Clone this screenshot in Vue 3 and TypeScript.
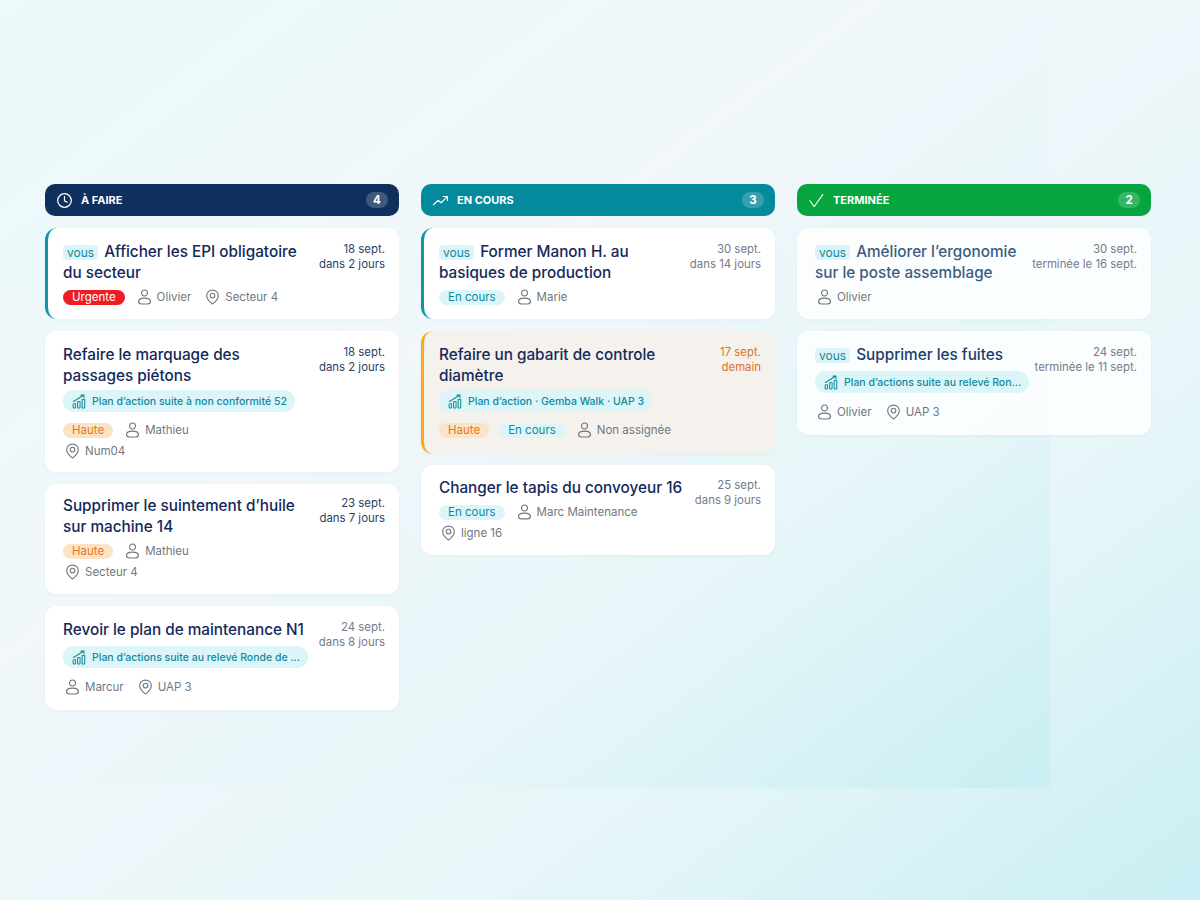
<script setup lang="ts">
type Item = { kind: 'urgent' | 'high' | 'status' | 'user' | 'place'; text: string }
type Task = {
  title: string
  vous?: boolean
  date: string
  due: string
  plan?: string
  rows: Item[][]
  tone?: string
  cls?: string
}
type Column = { name: string; count: number; icon: string; cls: string; tasks: Task[] }

const columns: Column[] = [
  {
    name: 'À FAIRE', count: 4, icon: 'clock', cls: 'navy',
    tasks: [
      {
        title: 'Afficher les EPI obligatoire du secteur', vous: true, date: '18 sept.', due: 'dans 2 jours', tone: 'soon', cls: 'accent',
        rows: [[{ kind: 'urgent', text: 'Urgente' }, { kind: 'user', text: 'Olivier' }, { kind: 'place', text: 'Secteur 4' }]],
      },
      {
        title: 'Refaire le marquage des passages piétons', date: '18 sept.', due: 'dans 2 jours', tone: 'soon', cls: 'has-plan',
        plan: 'Plan d’action suite à non conformité 52',
        rows: [[{ kind: 'high', text: 'Haute' }, { kind: 'user', text: 'Mathieu' }], [{ kind: 'place', text: 'Num04' }]],
      },
      {
        title: 'Supprimer le suintement d’huile sur machine 14', date: '23 sept.', due: 'dans 7 jours', tone: 'soon', cls: 'top12',
        rows: [[{ kind: 'high', text: 'Haute' }, { kind: 'user', text: 'Mathieu' }], [{ kind: 'place', text: 'Secteur 4' }]],
      },
      {
        title: 'Revoir le plan de maintenance N1', date: '24 sept.', due: 'dans 8 jours', cls: 'one-line',
        plan: 'Plan d’actions suite au relevé Ronde de ...',
        rows: [[{ kind: 'user', text: 'Marcur' }, { kind: 'place', text: 'UAP 3' }]],
      },
    ],
  },
  {
    name: 'EN COURS', count: 3, icon: 'trend', cls: 'teal',
    tasks: [
      {
        title: 'Former Manon H. au basiques de production', vous: true, date: '30 sept.', due: 'dans 14 jours', cls: 'accent',
        rows: [[{ kind: 'status', text: 'En cours' }, { kind: 'user', text: 'Marie' }]],
      },
      {
        title: 'Refaire un gabarit de controle diamètre', date: '17 sept.', due: 'demain', tone: 'late', cls: 'has-plan warn',
        plan: 'Plan d’action · Gemba Walk · UAP 3',
        rows: [[{ kind: 'high', text: 'Haute' }, { kind: 'status', text: 'En cours' }, { kind: 'user', text: 'Non assignée' }]],
      },
      {
        title: 'Changer le tapis du convoyeur 16', date: '25 sept.', due: 'dans 9 jours', cls: 'top13 pulled',
        rows: [[{ kind: 'status', text: 'En cours' }, { kind: 'user', text: 'Marc Maintenance' }], [{ kind: 'place', text: 'ligne 16' }]],
      },
    ],
  },
  {
    name: 'TERMINÉE', count: 2, icon: 'check', cls: 'green',
    tasks: [
      {
        title: 'Améliorer l’ergonomie sur le poste assemblage', vous: true, date: '30 sept.', due: 'terminée le 16 sept.', cls: 'done faded',
        rows: [[{ kind: 'user', text: 'Olivier' }]],
      },
      {
        title: 'Supprimer les fuites', vous: true, date: '24 sept.', due: 'terminée le 11 sept.', cls: 'done one-line',
        plan: 'Plan d’actions suite au relevé Ron...',
        rows: [[{ kind: 'user', text: 'Olivier' }, { kind: 'place', text: 'UAP 3' }]],
      },
    ],
  },
]

const chipKinds = ['urgent', 'high', 'status']
</script>

<template>
  <svg class="sprite" aria-hidden="true">
    <symbol id="i-clock" viewBox="0 0 18 18">
      <circle cx="9" cy="9" r="7.2" fill="none" stroke="currentColor" stroke-width="1.3" />
      <path d="M9 4.8V9.4L11.8 10.9" fill="none" stroke="currentColor" stroke-width="1.3" stroke-linecap="round" />
    </symbol>
    <symbol id="i-trend" viewBox="0 0 18 18">
      <path d="M1.5 13.5 6.4 8.8 9.6 11.4 16 5.2M11.8 4.8H16.3V9" fill="none" stroke="currentColor" stroke-width="1.2" stroke-linecap="round" stroke-linejoin="round" />
    </symbol>
    <symbol id="i-check" viewBox="0 0 18 18">
      <path d="M2 9.3 6.6 15.4 15.6 2.8" fill="none" stroke="currentColor" stroke-width="1.2" stroke-linecap="round" stroke-linejoin="round" />
    </symbol>
    <symbol id="i-user" viewBox="0 0 16 17">
      <circle cx="8" cy="4.2" r="3.2" fill="none" stroke="currentColor" stroke-width="1.2" />
      <path d="M1.600 13.400C1.600 11 4.400 9.700 8 9.700S14.400 11 14.400 13.400C14.400 15.100 13 15.900 11.200 15.900H4.800C3 15.900 1.600 15.100 1.600 13.400Z" fill="none" stroke="currentColor" stroke-width="1.2" />
    </symbol>
    <symbol id="i-pin" viewBox="0 0 16 17">
      <path d="M8 1.100C4.400 1.100 1.800 3.800 1.800 7.100 1.800 10.700 5.300 13.900 8 16 10.700 13.900 14.200 10.700 14.200 7.100 14.200 3.800 11.600 1.100 8 1.100Z" fill="none" stroke="currentColor" stroke-width="1.2" stroke-linejoin="round" />
      <circle cx="8" cy="7" r="2.500" fill="none" stroke="currentColor" stroke-width="1.2" />
    </symbol>
    <symbol id="i-chart" viewBox="0 0 16 16">
      <g fill="none" stroke="currentColor" stroke-width="1.1" stroke-linejoin="round">
        <rect x="1.200" y="10.500" width="2.600" height="4.500" rx=".8" />
        <rect x="6" y="8" width="2.600" height="7" rx=".8" />
        <rect x="10.800" y="5.500" width="2.800" height="9.500" rx=".8" />
        <path d="M1.500 8 8 4 12 1.600M9.600 1.200H12.800V4" stroke-linecap="round" />
      </g>
    </symbol>
  </svg>

  <main class="board">
    <section v-for="col in columns" :key="col.name" class="column">
      <header class="head" :class="col.cls">
        <svg class="head-icon"><use :href="`#i-${col.icon}`" /></svg>
        <span class="head-name">{{ col.name }}</span>
        <span class="count">{{ col.count }}</span>
      </header>

      <article v-for="task in col.tasks" :key="task.title" class="card" :class="task.cls">
        <div class="card-top">
          <h3 class="title"><span v-if="task.vous" class="vous">vous</span>{{ task.title }}</h3>
          <div class="dates" :class="task.tone">
            <div>{{ task.date }}</div>
            <div>{{ task.due }}</div>
          </div>
        </div>

        <div v-if="task.plan" class="plan">
          <svg class="plan-icon"><use href="#i-chart" /></svg>
          <span>{{ task.plan }}</span>
        </div>

        <div class="rows">
          <div v-for="(row, i) in task.rows" :key="i" class="row">
            <template v-for="item in row" :key="item.text">
              <span v-if="chipKinds.includes(item.kind)" class="chip" :class="item.kind">{{ item.text }}</span>
              <span v-else class="info" :class="item.kind">
                <svg class="info-icon"><use :href="item.kind === 'user' ? '#i-user' : '#i-pin'" /></svg>
                {{ item.text }}
              </span>
            </template>
          </div>
        </div>
      </article>
    </section>
  </main>
</template>

<style>
html,
body {
  margin: 0;
  background: #e6f6f9;
}
</style>

<style scoped>
.sprite {
  display: none;
}

.board {
  box-sizing: border-box;
  width: 1200px;
  height: 900px;
  padding: 184px 49px 0 45px;
  display: grid;
  grid-template-columns: repeat(3, 354px);
  column-gap: 22px;
  align-items: start;
  font-family: Inter, "Open Sans", sans-serif;
  background:
    linear-gradient(143deg, #ebfafa 0%, #f1f7fb 42%, #e6f6f8 72%, #c9eef3 100%) 0 0 / 1050px 788px no-repeat,
    linear-gradient(143deg, #ebfafa 0%, #f1f7fb 42%, #e6f6f8 72%, #c9eef3 100%);
}

.column {
  display: flex;
  flex-direction: column;
  gap: 12px;
}

.head {
  height: 32px;
  border-radius: 10px;
  display: flex;
  align-items: center;
  padding: 0 11px 0 11px;
  color: #fff;
  box-sizing: border-box;
}

.navy { background: #0f2f5c; }
.teal { background: #05899c; }
.green { background: #06a53f; }

.head-icon {
  width: 17px;
  height: 17px;
  margin-right: 8px;
}

.head-name {
  font-size: 11px;
  font-weight: 700;
}

.count {
  margin-left: auto;
  width: 22px;
  height: 16px;
  border-radius: 8px;
  background: rgba(255, 255, 255, 0.2);
  font-size: 11.5px;
  font-weight: 700;
  line-height: 16px;
  text-align: center;
}

.card {
  box-sizing: border-box;
  background: #fff;
  border-radius: 12px;
  padding: 14px 14px 13px 18px;
  box-shadow: 0 1px 4px rgba(30, 80, 110, 0.04);
}

.card.accent {
  border-left: 3px solid #0d96a8;
  padding-left: 15px;
}

.card.has-plan {
  padding-bottom: 12px;
}

.card.one-line {
  padding-bottom: 14px;
}

.card.warn {
  border-left: 3px solid #f9a91e;
  padding-left: 15px;
  padding-bottom: 15px;
  background: #f5f1ec;
}

.card.done {
  background: rgba(255, 255, 255, 0.82);
}

.card.top12 {
  padding-top: 12px;
}

.card.top13 {
  padding-top: 13px;
}

.card.pulled {
  margin-top: -1px;
}

.pulled .rows {
  margin-top: -4px;
}

.card-top {
  display: flex;
  justify-content: space-between;
  gap: 10px;
}

.title {
  margin: 0 0 5px;
  font-size: 15.3px;
  font-weight: 500;
  line-height: 20.5px;
  color: #14295a;
}

.faded .title {
  color: #3c5c82;
}

.done.one-line .title {
  color: #1d3c6c;
}

.vous {
  display: inline-block;
  height: 15px;
  line-height: 15px;
  padding: 0 4px;
  margin-right: 6px;
  border-radius: 4px;
  background: #dcf4f8;
  color: #0f8a9b;
  font-size: 12px;
  font-weight: 400;
}

.dates {
  flex: none;
  text-align: right;
  font-size: 11.4px;
  line-height: 14.5px;
  color: #747c8a;
}

.dates.soon {
  color: #2b4168;
}

.dates.late {
  color: #de7128;
}

.plan {
  display: inline-flex;
  align-items: center;
  height: 22px;
  padding: 0 8px 0 9px;
  border-radius: 11px;
  background: #dcf5f9;
  color: #0f8a9b;
  font-size: 10.5px;
  font-weight: 500;
  white-space: nowrap;
}

.has-plan .title {
  margin-bottom: 4px;
}

.has-plan .plan {
  margin-bottom: 9px;
}

.one-line .plan {
  margin-top: -3px;
  margin-bottom: 10px;
  display: flex;
  width: fit-content;
}

.plan-icon {
  width: 15px;
  height: 15px;
  margin-right: 5px;
  flex: none;
}

.rows {
  display: flex;
  flex-direction: column;
  gap: 3px;
}

.row {
  display: flex;
  align-items: center;
  height: 18px;
  gap: 12px;
}

.chip {
  height: 15px;
  line-height: 15px;
  padding: 0 9px;
  border-radius: 8px;
  font-size: 11.5px;
  white-space: nowrap;
}

.chip + .chip {
  margin-left: -2px;
}

.urgent {
  background: #ee1c25;
  color: #fff;
}

.high {
  background: #fde3c6;
  color: #e8761e;
}

.status {
  background: #dcf5f9;
  color: #0f8a9b;
}

.info {
  display: flex;
  align-items: center;
  gap: 5px;
  font-size: 11.5px;
  color: #70777f;
  white-space: nowrap;
}

.info + .info {
  margin-left: 2px;
}

.info-icon {
  width: 15px;
  height: 16px;
  flex: none;
}

.row > .info:first-child {
  margin-left: 2px;
}
</style>
